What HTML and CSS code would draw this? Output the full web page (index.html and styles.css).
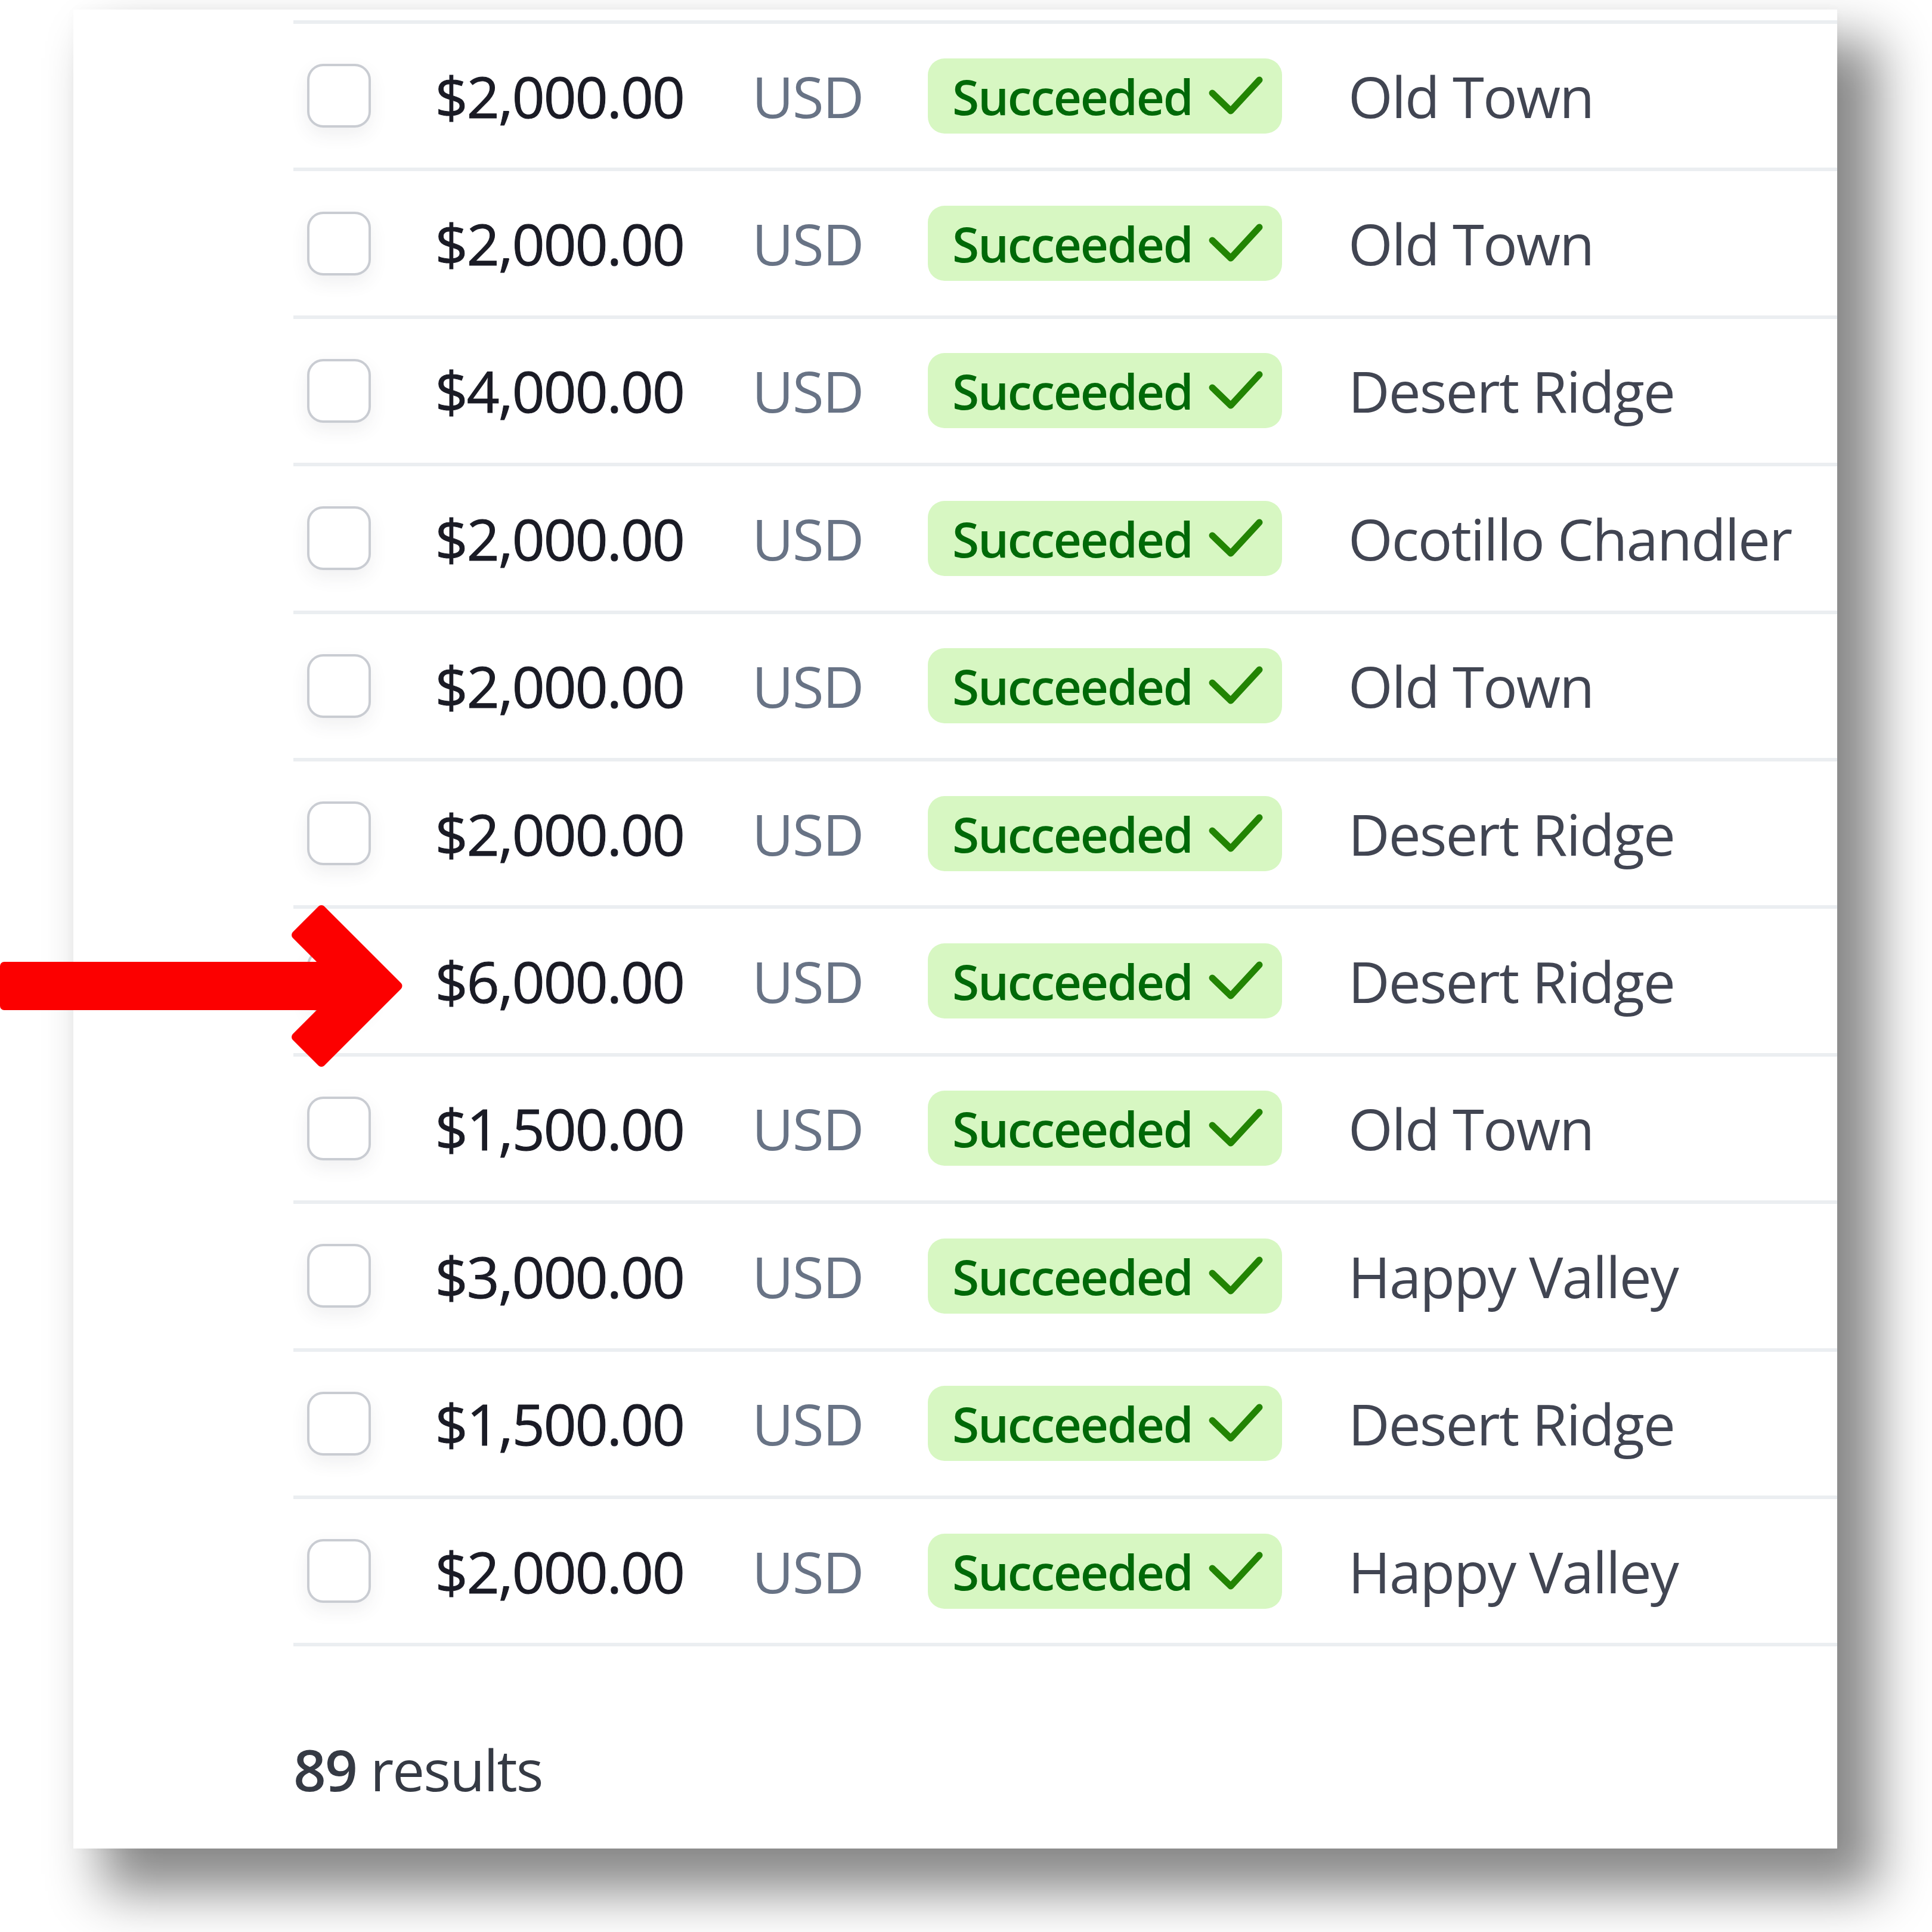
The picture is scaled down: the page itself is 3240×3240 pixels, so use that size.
FILE: index.html
```html
<!DOCTYPE html>
<html lang="en">
<head>
<meta charset="utf-8">
<title>Payments</title>
<link rel="stylesheet" href="styles.css">
</head>
<body>
<div class="stage">
  <div class="card">
    <div class="table">
      <div class="row"><div class="cell-check"><span class="checkbox"></span></div><div class="cell-amount">$2,000.00</div><div class="cell-currency">USD</div><div class="cell-status"><span class="badge">Succeeded<svg class="check" viewBox="0 0 92 66"><polyline points="6,28 37,58 85,6"/></svg></span></div><div class="cell-location">Old Town</div></div>
      <div class="row"><div class="cell-check"><span class="checkbox"></span></div><div class="cell-amount">$2,000.00</div><div class="cell-currency">USD</div><div class="cell-status"><span class="badge">Succeeded<svg class="check" viewBox="0 0 92 66"><polyline points="6,28 37,58 85,6"/></svg></span></div><div class="cell-location">Old Town</div></div>
      <div class="row"><div class="cell-check"><span class="checkbox"></span></div><div class="cell-amount">$4,000.00</div><div class="cell-currency">USD</div><div class="cell-status"><span class="badge">Succeeded<svg class="check" viewBox="0 0 92 66"><polyline points="6,28 37,58 85,6"/></svg></span></div><div class="cell-location">Desert Ridge</div></div>
      <div class="row"><div class="cell-check"><span class="checkbox"></span></div><div class="cell-amount">$2,000.00</div><div class="cell-currency">USD</div><div class="cell-status"><span class="badge">Succeeded<svg class="check" viewBox="0 0 92 66"><polyline points="6,28 37,58 85,6"/></svg></span></div><div class="cell-location">Ocotillo Chandler</div></div>
      <div class="row"><div class="cell-check"><span class="checkbox"></span></div><div class="cell-amount">$2,000.00</div><div class="cell-currency">USD</div><div class="cell-status"><span class="badge">Succeeded<svg class="check" viewBox="0 0 92 66"><polyline points="6,28 37,58 85,6"/></svg></span></div><div class="cell-location">Old Town</div></div>
      <div class="row"><div class="cell-check"><span class="checkbox"></span></div><div class="cell-amount">$2,000.00</div><div class="cell-currency">USD</div><div class="cell-status"><span class="badge">Succeeded<svg class="check" viewBox="0 0 92 66"><polyline points="6,28 37,58 85,6"/></svg></span></div><div class="cell-location">Desert Ridge</div></div>
      <div class="row"><div class="cell-check"><span class="checkbox"></span></div><div class="cell-amount">$6,000.00</div><div class="cell-currency">USD</div><div class="cell-status"><span class="badge">Succeeded<svg class="check" viewBox="0 0 92 66"><polyline points="6,28 37,58 85,6"/></svg></span></div><div class="cell-location">Desert Ridge</div></div>
      <div class="row"><div class="cell-check"><span class="checkbox"></span></div><div class="cell-amount">$1,500.00</div><div class="cell-currency">USD</div><div class="cell-status"><span class="badge">Succeeded<svg class="check" viewBox="0 0 92 66"><polyline points="6,28 37,58 85,6"/></svg></span></div><div class="cell-location">Old Town</div></div>
      <div class="row"><div class="cell-check"><span class="checkbox"></span></div><div class="cell-amount">$3,000.00</div><div class="cell-currency">USD</div><div class="cell-status"><span class="badge">Succeeded<svg class="check" viewBox="0 0 92 66"><polyline points="6,28 37,58 85,6"/></svg></span></div><div class="cell-location">Happy Valley</div></div>
      <div class="row"><div class="cell-check"><span class="checkbox"></span></div><div class="cell-amount">$1,500.00</div><div class="cell-currency">USD</div><div class="cell-status"><span class="badge">Succeeded<svg class="check" viewBox="0 0 92 66"><polyline points="6,28 37,58 85,6"/></svg></span></div><div class="cell-location">Desert Ridge</div></div>
      <div class="row row-last"><div class="cell-check"><span class="checkbox"></span></div><div class="cell-amount">$2,000.00</div><div class="cell-currency">USD</div><div class="cell-status"><span class="badge">Succeeded<svg class="check" viewBox="0 0 92 66"><polyline points="6,28 37,58 85,6"/></svg></span></div><div class="cell-location">Happy Valley</div></div>
    </div>
    <div class="footer"><span class="count">89</span> results</div>
  </div>
</div>
<svg class="arrow" viewBox="0 1500 700 300" aria-hidden="true">
  <polygon points="7,1620 548,1620 496,1568 539,1525 667.5,1653.5 539,1782 496,1739 548,1687 7,1687"/>
</svg>
</body>
</html>
```

FILE: styles.css
```css
html, body {
  margin: 0;
  padding: 0;
}

body {
  position: relative;
  width: 3240px;
  height: 3240px;
  overflow: hidden;
  background: #ffffff;
  font-family: "Open Sans", "Noto Sans", "DejaVu Sans", sans-serif;
  font-size: 96px;
  line-height: 134px;
  letter-spacing: -1.9px;
}

.stage {
  padding: 16px 0 0 123px;
}

.card {
  box-sizing: border-box;
  width: 2958px;
  height: 3084px;
  padding: 18px 0 0 369px;
  background: #ffffff;
  box-shadow: 58px 62px 84px 10px rgba(0, 0, 0, 0.47), 0 0 18px rgba(0, 0, 0, 0.025);
}

.row {
  box-sizing: border-box;
  display: flex;
  align-items: center;
  height: 247.4px;
  border-top: 6px solid #ebeef1;
}

.row-last {
  height: 253.4px;
  border-bottom: 6px solid #ebeef1;
}

.cell-check {
  box-sizing: border-box;
  width: 130px;
  padding-left: 23px;
  display: flex;
  align-items: center;
}

.checkbox {
  box-sizing: border-box;
  display: block;
  width: 107px;
  height: 107px;
  border: 4px solid #c9ccd2;
  border-radius: 27px;
  background: #ffffff;
  box-shadow: 0 12px 30px rgba(64, 68, 82, 0.08);
}

.cell-amount {
  width: 525px;
  text-align: right;
  font-weight: 500;
  color: #1a1b25;
  -webkit-text-stroke: 1px #1a1b25;
}

.cell-currency {
  box-sizing: border-box;
  width: 409px;
  padding-left: 114px;
  color: #687385;
}

.cell-status {
  width: 705px;
  display: flex;
  align-items: center;
}

.badge {
  display: inline-flex;
  align-items: center;
  gap: 27px;
  height: 126px;
  padding: 0 31px 0 41px;
  border-radius: 28px;
  background: #d7f7c2;
  color: #006908;
  font-size: 82px;
  font-weight: 600;
  letter-spacing: -2.2px;
}

.check {
  width: 92px;
  height: 66px;
  fill: none;
  stroke: #228403;
  stroke-width: 11;
  stroke-linecap: round;
  stroke-linejoin: round;
}

.cell-location {
  color: #414552;
  white-space: nowrap;
}

.footer {
  padding-top: 139px;
  color: #353a44;
}

.count {
  font-weight: 600;
}

.arrow {
  position: absolute;
  left: 0;
  top: 1500px;
  width: 700px;
  height: 300px;
  fill: #fc0000;
  stroke: #fc0000;
  stroke-width: 14;
  stroke-linejoin: round;
}
```
